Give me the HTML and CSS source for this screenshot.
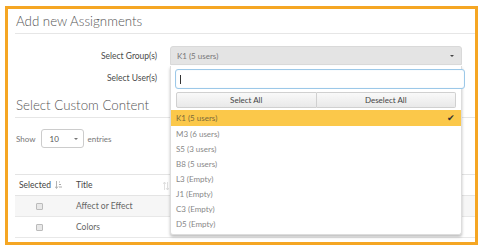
FILE: index.html
```html
<!DOCTYPE html>
<html>
<head>
<meta charset="utf-8">
<link rel="stylesheet" href="styles.css">
</head>
<body>
<div class="frame">
  <h2 class="heading">Add new Assignments</h2>
  <div class="form-row row-group">
    <label class="lbl">Select Group(s)</label>
    <div class="selectbox">
      <span>K1 (5 users)</span>
      <span class="caret"></span>
    </div>
  </div>
  <div class="form-row row-user">
    <label class="lbl">Select User(s)</label>
  </div>
  <h2 class="heading">Select Custom Content</h2>
  <div class="length">
    <span>Show</span>
    <div class="small-select"><span>10</span><span class="caret small"></span></div>
    <span>entries</span>
  </div>
  <table class="table">
    <thead>
      <tr>
        <th class="col-sel">Selected <svg class="sort" width="7" height="8" viewBox="0 0 7 8"><path d="M1.5 0v7M0 5.5l1.5 2 1.5-2" stroke="#aaa" fill="none" stroke-width="0.9"/><path d="M4 1h1M4 3.5h2M4 6h3" stroke="#aaa" stroke-width="1"/></svg></th>
        <th class="col-title">Title <svg class="sort2" width="6" height="8" viewBox="0 0 6 8"><path d="M1.5 0v8M0 2l1.5-2 1.5 2M4.5 0v8M3 6l1.5 2 1.5-2" stroke="#ddd" fill="none" stroke-width="0.9"/></svg></th>
        <th></th>
      </tr>
    </thead>
    <tbody>
      <tr class="odd"><td class="col-sel"><span class="cb"></span></td><td>Affect or Effect</td><td></td></tr>
      <tr><td class="col-sel"><span class="cb"></span></td><td>Colors</td><td></td></tr>
    </tbody>
  </table>

  <div class="dropdown">
    <div class="search"><span class="cursor"></span></div>
    <div class="btns">
      <button class="btn">Select All</button>
      <button class="btn">Deselect All</button>
    </div>
    <ul class="opts">
      <li class="active">K1 (5 users) <span class="check">✔</span></li>
      <li>M3 (6 users)</li>
      <li>S5 (3 users)</li>
      <li>B8 (5 users)</li>
      <li>L3 (Empty)</li>
      <li>J1 (Empty)</li>
      <li>C3 (Empty)</li>
      <li>D5 (Empty)</li>
    </ul>
  </div>
</div>
</body>
</html>
```
FILE: styles.css
```css
* { box-sizing: border-box; }
html, body { margin: 0; padding: 0; background: #fff; }
body {
  font-family: "Lato", "Open Sans", sans-serif;
  color: #555;
  width: 487px;
  height: 252px;
  overflow: hidden;
}
.frame {
  position: relative;
  margin: 6px 9px 0 5px;
  height: 239px;
  border: 3px solid #f5a623;
  padding: 0 0 0 7px;
  background: #fff;
}
.heading {
  margin: 0;
  padding-left: 1px;
  height: 25px;
  line-height: 24px;
  font-size: 13.3px;
  font-weight: 300;
  color: #555;
  border-bottom: 1px solid #e6e6e6;
}
.form-row {
  display: flex;
  align-items: center;
}
.row-group { margin-top: 12px; height: 19px; }
.row-user { height: 28px; align-items: flex-start; padding-top: 8px; }
.lbl {
  width: 142px;
  text-align: right;
  font-size: 8.5px;
  color: #4a4a4a;
  margin-right: 13px;
}
.selectbox {
  width: 292px;
  height: 19px;
  background: #e4e4e4;
  border: 1px solid #d9d9d9;
  border-radius: 3px 3px 0 0;
  display: flex;
  align-items: center;
  justify-content: space-between;
  padding: 0 7px 0 6px;
  font-size: 8px;
  color: #777;
}
.caret {
  width: 0; height: 0;
  border-left: 2px solid transparent;
  border-right: 2px solid transparent;
  border-top: 2.5px solid #444;
}
.length {
  display: flex;
  align-items: center;
  margin-top: 11px;
  height: 19px;
  font-size: 8px;
  color: #777;
  padding-left: 1px;
}
.small-select {
  width: 43px;
  height: 19px;
  margin: 0 4px 0 5px;
  border: 1px solid #ccc;
  border-radius: 3px;
  display: flex;
  align-items: center;
  justify-content: space-between;
  padding: 0 5px 0 8px;
  color: #555;
}
.caret.small { border-top-color: #777; }
.table {
  margin-top: 26px;
  width: 460px;
  border-collapse: collapse;
  font-size: 8.5px;
}
.table th {
  height: 21px;
  text-align: left;
  font-weight: 400;
  color: #444;
  border-top: 1px solid #e4e4e4;
  border-bottom: 1px solid #e4e4e4;
  padding: 0 0 0 5px;
  white-space: nowrap;
}
.table th.col-sel { width: 56px; padding-left: 4px; }
.table th.col-title { width: 100px; position: relative; }
.sort { vertical-align: -1px; margin-left: 2px; }
.sort2 { position: absolute; right: 2px; top: 7px; }
.table td {
  height: 21px;
  border-bottom: 1px solid #e8e8e8;
  color: #666;
  padding: 0 0 0 5px;
}
.table tr.odd td { background: #f6f6f6; }
.table td.col-sel { text-align: center; padding: 0 8px 0 0; }
.cb {
  display: inline-block;
  width: 7px; height: 7px;
  border: 1px solid #bbb;
  background: #e8e8e8;
  border-radius: 1px;
  vertical-align: middle;
}
.dropdown {
  position: absolute;
  left: 162px;
  top: 57px;
  width: 292px;
  height: 169px;
  background: #fff;
  border: 1px solid #ddd;
  border-top: none;
  border-radius: 0 0 3px 3px;
  box-shadow: 0 2px 3px rgba(0,0,0,0.25);
  padding-top: 3px;
}
.search {
  margin-left: 4px;
  width: 290px;
  height: 20px;
  border: 1px solid #9cc8e8;
  border-radius: 3px;
  box-shadow: inset 0 0 1px rgba(102,175,233,0.4);
  background: #fff;
  position: relative;
}
.cursor {
  position: absolute;
  left: 4px; top: 5px;
  width: 1px; height: 9px;
  background: #333;
}
.btns {
  display: flex;
  margin: 3px 0 0 5px;
  width: 280px;
}
.btn {
  flex: 1;
  height: 16px;
  border: 1px solid #d0d0d0;
  background: linear-gradient(#f9f9f9, #e9e9e9);
  font-family: inherit;
  font-size: 8px;
  color: #444;
  padding: 0;
  border-radius: 2px 0 0 2px;
}
.btn + .btn { border-left: none; border-radius: 0 2px 2px 0; }
.opts {
  list-style: none;
  margin: 2px 0 0 0;
  padding: 0;
}
.opts li {
  height: 15px;
  line-height: 15px;
  font-size: 8px;
  color: #888;
  padding-left: 5px;
  position: relative;
}
.opts li.active {
  background: #fbc84a;
  color: #7a6a3a;
  height: 16px;
  line-height: 16px;
  margin-bottom: 1px;
}
.check {
  position: absolute;
  right: 6px;
  top: 0;
  color: #333;
  font-size: 9px;
}
```
